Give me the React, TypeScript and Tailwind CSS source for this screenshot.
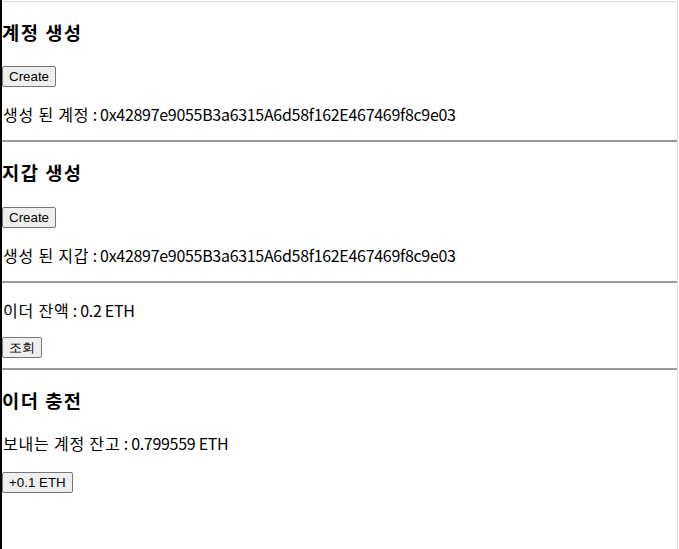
import React from 'react';

const ADDR = '0x42897e9055B3a6315A6d58f162E467469f8c9e03';

function Btn({ children }: { children: React.ReactNode }) {
  return (
    <button className="h-[21px] rounded-[2px] border border-[#767676] bg-[#efefef] px-[6px] font-['Liberation_Sans',Arial,sans-serif] text-[13.33px] leading-[19px] text-black">
      {children}
    </button>
  );
}

function Rule() {
  return <div className="h-[2px] w-full bg-[#9a9a9a]" />;
}

// korean label + latin value, spacing tuned to the original font widths
function Line({ label, value }: { label: string; value: string }) {
  return (
    <p className="pl-px leading-[21px]">
      <span className="tracking-[0.8px]">{label}</span>
      <span className="tracking-[-0.3px]"> : {value}</span>
    </p>
  );
}

export default function App() {
  return (
    <div className="flex h-[549px] w-[679px] bg-white font-['Noto_Sans_CJK_KR',sans-serif] text-[16px] text-black">
      <div className="w-[2px] shrink-0 bg-black" />
      <div className="flex-1 pt-px pr-px">
        <div className="h-full border-t border-r border-[#dcdcdc]">
          {/* 계정 생성 */}
          <section className="pt-[17px] pb-[15px]">
            <h3 className="text-[18.72px] font-bold leading-[25px] tracking-[1.5px]">계정 생성</h3>
            <div className="mt-[21px] flex h-[22px] items-start pt-px">
              <Btn>Create</Btn>
            </div>
            <div className="mt-[17px]">
              <Line label="생성 된 계정" value={ADDR} />
            </div>
          </section>
          <Rule />

          {/* 지갑 생성 */}
          <section className="pt-[17px] pb-[15px]">
            <h3 className="text-[18.72px] font-bold leading-[25px] tracking-[1.5px]">지갑 생성</h3>
            <div className="mt-[22px] flex h-[22px] items-start pt-px">
              <Btn>Create</Btn>
            </div>
            <div className="mt-[17px]">
              <Line label="생성 된 지갑" value={ADDR} />
            </div>
          </section>
          <Rule />

          {/* 이더 잔액 */}
          <section className="pt-[17px] pb-[10px]">
            <Line label="이더 잔액" value="0.2 ETH" />
            <div className="mt-[15px] flex h-[22px] items-start pt-px">
              <Btn>조회</Btn>
            </div>
          </section>
          <Rule />

          {/* 이더 충전 */}
          <section className="pt-[17px]">
            <h3 className="text-[18.72px] font-bold leading-[25px] tracking-[1.5px]">이더 충전</h3>
            <div className="mt-[21px]">
              <Line label="보내는 계정 잔고" value="0.799559 ETH" />
            </div>
            <div className="mt-[17px] flex h-[22px] items-start pt-px">
              <Btn>+0.1 ETH</Btn>
            </div>
          </section>
        </div>
      </div>
    </div>
  );
}
